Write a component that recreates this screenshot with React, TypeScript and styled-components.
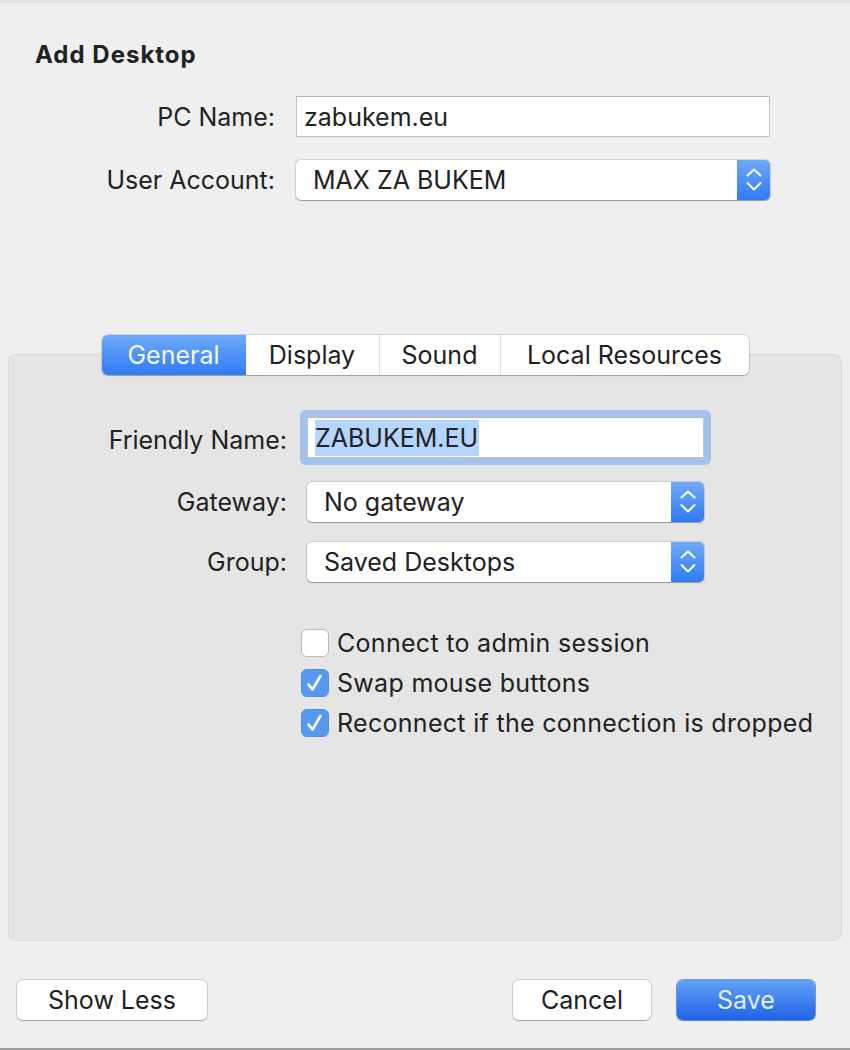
import React from 'react';
import styled, { createGlobalStyle } from 'styled-components';

/** Style */

const GlobalStyle = createGlobalStyle`
  html, body {
    margin: 0;
    padding: 0;
    background: #efefef;
  }
  body {
    font-family: Inter, 'Liberation Sans', Arial, sans-serif;
    color: #222;
  }
`;

const Window = styled.div`
  width: 850px;
  height: 1050px;
  box-sizing: border-box;
  background: #efefef;
  border-top: 3px solid #e5e5e5;
  border-bottom: 2px solid #9d9d9d;
  display: flex;
  flex-direction: column;
`;

const Title = styled.h1`
  margin: 37px 0 0 35px;
  font-size: 24px;
  line-height: 30px;
  font-weight: 700;
  letter-spacing: 1px;
  color: #222;
`;

const Form = styled.div<{ labelWidth: number; fieldWidth: number; gap: number }>`
  display: grid;
  grid-template-columns: ${(p) => `${p.labelWidth}px ${p.fieldWidth}px`};
  column-gap: ${(p) => p.gap}px;
  row-gap: 23px;
  align-items: center;
`;

const TopForm = styled(Form)`
  margin-top: 26px;
`;

const Label = styled.label`
  text-align: right;
  font-size: 25px;
  color: #222;
  white-space: nowrap;
`;

const TextField = styled.div`
  height: 41px;
  box-sizing: border-box;
  background: #fff;
  border: 1px solid #c3c3c3;
  border-top-color: #b5b5b5;
  display: flex;
  align-items: center;
  padding-left: 7px;
  font-size: 25px;
  color: #222;
`;

const FocusRing = styled.div`
  padding: 7px;
  border-radius: 6px;
  background: #a3c3ee;
  margin: -7px -7px -3px;
`;

const Selection = styled.span`
  background: #b3d5fe;
  padding: 3px 1px 3px 0;
`;

const SelectBox = styled.div`
  height: 40px;
  box-sizing: border-box;
  background: #fff;
  border-radius: 5px;
  box-shadow: 0 0 0 1px rgba(0, 0, 0, 0.12), 0 1px 1px rgba(0, 0, 0, 0.25);
  display: flex;
  align-items: center;
  overflow: hidden;
`;

const SelectText = styled.span`
  flex: 1;
  padding-left: 17px;
  font-size: 25px;
  color: #222;
`;

const Stepper = styled.div`
  width: 33px;
  align-self: stretch;
  background: linear-gradient(#6fa9f9, #2f7bf6);
  display: flex;
  align-items: center;
  justify-content: center;
`;

const Spacer = styled.div`
  flex: 1;
`;

const PanelArea = styled.div`
  display: flex;
  flex-direction: column;
  align-items: center;
  margin-top: 135px;
`;

const TabBar = styled.div`
  position: relative;
  z-index: 1;
  display: flex;
  height: 40px;
  box-sizing: border-box;
  background: #fff;
  border-radius: 6px;
  box-shadow: 0 0 0 1px rgba(0, 0, 0, 0.13), 0 1px 1px rgba(0, 0, 0, 0.2);
  overflow: hidden;
  margin-bottom: -21px;
`;

const Tab = styled.div<{ active?: boolean; w: number }>`
  width: ${(p) => p.w}px;
  display: flex;
  align-items: center;
  justify-content: center;
  font-size: 25px;
  color: ${(p) => (p.active ? '#f4f8ff' : '#1e1e1e')};
  background: ${(p) => (p.active ? 'linear-gradient(#6eaaf9, #307cf6)' : '#fff')};
  border-left: ${(p) => (p.active ? 'none' : '1px solid #dcdcdc')};
  &:nth-child(2) {
    border-left: none;
  }
`;

const Panel = styled.div`
  align-self: stretch;
  margin: 0 8px;
  height: 587px;
  box-sizing: border-box;
  background: #e5e5e5;
  border: 1px solid #dadada;
  border-radius: 8px;
  padding-top: 62px;
`;

const PanelForm = styled(Form)`
  row-gap: 20px;
`;

const Checks = styled.div`
  display: flex;
  flex-direction: column;
  gap: 12px;
  margin: 47px 0 0 292px;
`;

const CheckRow = styled.div`
  display: flex;
  align-items: center;
  gap: 8px;
  font-size: 25px;
  line-height: 28px;
  letter-spacing: 0.3px;
  color: #222;
`;

const Box = styled.div<{ checked?: boolean }>`
  width: 28px;
  height: 28px;
  box-sizing: border-box;
  border-radius: 6px;
  background: ${(p) => (p.checked ? '#5799f1' : '#fff')};
  border: 1px solid ${(p) => (p.checked ? '#4d90ec' : '#b9b9b9')};
  display: flex;
  align-items: center;
  justify-content: center;
`;

const Footer = styled.div`
  display: flex;
  align-items: center;
  padding: 0 35px 0 17px;
  margin-top: 39px;
`;

const Button = styled.div<{ primary?: boolean; w: number }>`
  width: ${(p) => p.w}px;
  height: 40px;
  box-sizing: border-box;
  border-radius: 6px;
  display: flex;
  align-items: center;
  justify-content: center;
  font-size: 25px;
  color: ${(p) => (p.primary ? '#e4eeff' : '#1e1e1e')};
  background: ${(p) => (p.primary ? 'linear-gradient(#63a1f8, #2163e6)' : '#fff')};
  box-shadow: ${(p) =>
    p.primary
      ? '0 0 0 1px rgba(30, 90, 220, 0.6), 0 1px 1px rgba(0, 0, 0, 0.2)'
      : '0 0 0 1px rgba(0, 0, 0, 0.13), 0 1px 1px rgba(0, 0, 0, 0.22)'};
  margin-left: ${(p) => (p.primary ? '26px' : '0')};
`;

/** End */

const Chevrons = () => (
  <svg width="16" height="26" viewBox="0 0 16 26">
    <path d="M1.5 8.5 L8 2.5 L14.5 8.5" fill="none" stroke="#fff" strokeWidth="2" strokeLinecap="round" strokeLinejoin="round" />
    <path d="M1.5 16 L8 22.5 L14.5 16" fill="none" stroke="#fff" strokeWidth="2" strokeLinecap="round" strokeLinejoin="round" />
  </svg>
);

const Select = ({ value }: { value: string }) => (
  <SelectBox>
    <SelectText>{value}</SelectText>
    <Stepper>
      <Chevrons />
    </Stepper>
  </SelectBox>
);

const Check = ({ checked, label }: { checked?: boolean; label: string }) => (
  <CheckRow>
    <Box checked={checked}>
      {checked && (
        <svg width="26" height="26" viewBox="0 0 26 26">
          <path d="M6.5 14.5 L10.5 19.5 L18.5 6" fill="none" stroke="#fff" strokeWidth="2.6" strokeLinecap="round" strokeLinejoin="round" />
        </svg>
      )}
    </Box>
    {label}
  </CheckRow>
);

const tabs = [
  { name: 'General', w: 144 },
  { name: 'Display', w: 133 },
  { name: 'Sound', w: 120 },
  { name: 'Local Resources', w: 248 },
];

export default function App() {
  return (
    <>
      <GlobalStyle />
      <Window>
        <Title>Add Desktop</Title>
        <TopForm labelWidth={275} fieldWidth={474} gap={21}>
          <Label>PC Name:</Label>
          <TextField>zabukem.eu</TextField>
          <Label>User Account:</Label>
          <Select value="MAX ZA BUKEM" />
        </TopForm>

        <PanelArea>
          <TabBar>
            {tabs.map((t) => (
              <Tab key={t.name} w={t.w} active={t.name === 'General'}>
                {t.name}
              </Tab>
            ))}
          </TabBar>
          <Panel>
            <PanelForm labelWidth={278} fieldWidth={397} gap={20}>
              <Label>Friendly Name:</Label>
              <FocusRing>
                <TextField>
                  <Selection>ZABUKEM.EU</Selection>
                </TextField>
              </FocusRing>
              <Label>Gateway:</Label>
              <Select value="No gateway" />
              <Label>Group:</Label>
              <Select value="Saved Desktops" />
            </PanelForm>
            <Checks>
              <Check label="Connect to admin session" />
              <Check checked label="Swap mouse buttons" />
              <Check checked label="Reconnect if the connection is dropped" />
            </Checks>
          </Panel>
        </PanelArea>

        <Footer>
          <Button w={190}>Show Less</Button>
          <Spacer />
          <Button w={138}>Cancel</Button>
          <Button primary w={138}>Save</Button>
        </Footer>
      </Window>
    </>
  );
}
